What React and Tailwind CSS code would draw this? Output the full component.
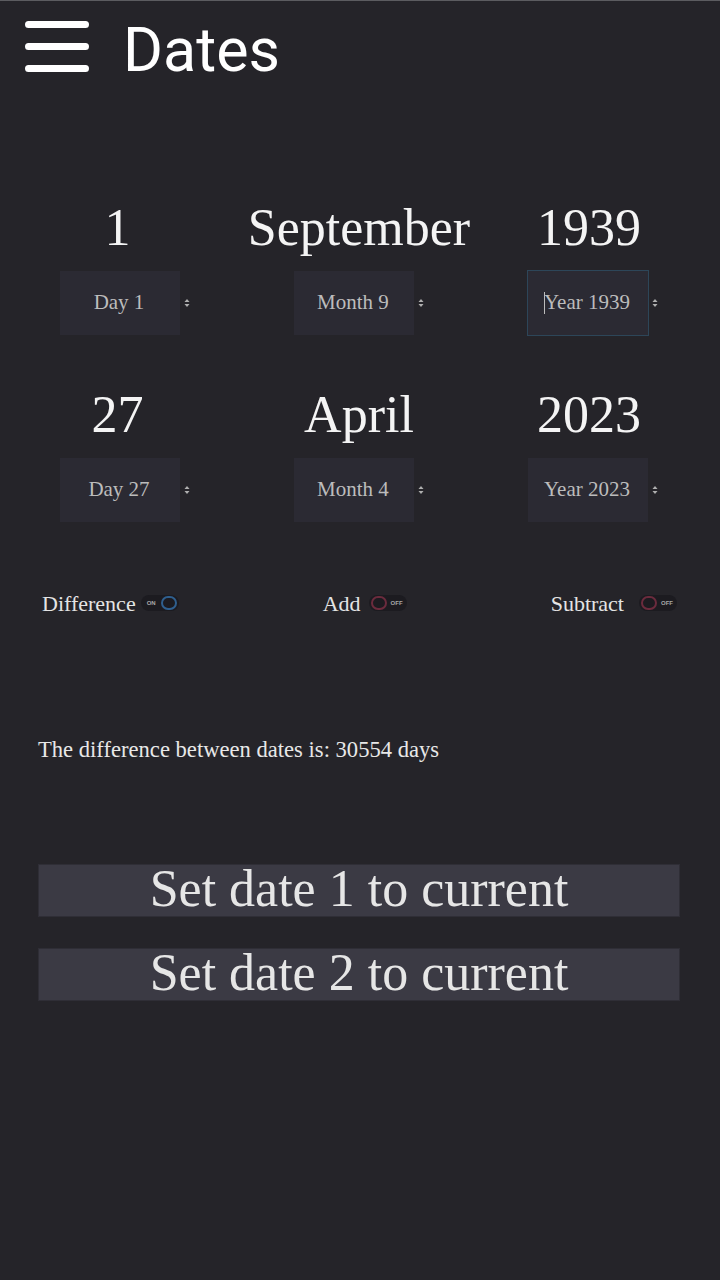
const dateRows = [
  [
    { big: '1', label: 'Day 1', shift: 'pr-[15px]' },
    { big: 'September', label: 'Month 9', shift: '' },
    { big: '1939', label: 'Year 1939', shift: 'pr-[8px]', focused: true },
  ],
  [
    { big: '27', label: 'Day 27', shift: 'pr-[15px]' },
    { big: 'April', label: 'Month 4', shift: '' },
    { big: '2023', label: 'Year 2023', shift: 'pr-[8px]' },
  ],
]

const Spinner = () => (
  <svg width="6" height="10" viewBox="0 0 6 10" className="ml-[4px]">
    <path d="M0.5 4 L3 1 L5.5 4 Z" fill="#b0b0b0" />
    <path d="M0.5 6 L3 9 L5.5 6 Z" fill="#b0b0b0" />
  </svg>
)

const Toggle = ({ on, gap }) => (
  <div className={`${gap} flex h-[16px] w-[38px] items-center rounded-full bg-[#1c1b20] px-[2px]`}>
    {on ? (
      <>
        <span className="ml-[4px] text-[6px] font-bold leading-none text-[#a8a8a8] [font-family:'Liberation_Sans',sans-serif]">ON</span>
        <span className="ml-auto h-[14px] w-[16px] rounded-full border-2 border-[#2f5f8e]" />
      </>
    ) : (
      <>
        <span className="h-[14px] w-[16px] rounded-full border-2 border-[#6b2b3d]" />
        <span className="ml-[4px] text-[6px] font-bold leading-none text-[#a8a8a8] [font-family:'Liberation_Sans',sans-serif]">OFF</span>
      </>
    )}
  </div>
)

const App = () => {
  return (
    <div className="min-h-[1280px] w-[720px] border-t border-[#5c5c60] bg-[#252429] [font-family:'Liberation_Serif',serif]">
      {/* Header */}
      <div className="flex h-[99px] items-center">
        <svg width="64" height="60" viewBox="0 0 64 60" className="ml-[25px] mt-[1px]">
          <path d="M3.5 3.5 H60.5 M3.5 25.5 H60.5 M3.5 47.5 H60.5" stroke="#ffffff" strokeWidth="7" strokeLinecap="round" />
        </svg>
        <h1 className="ml-[34px] text-[61px] leading-none text-white [font-family:Roboto,sans-serif]">Dates</h1>
      </div>

      {/* Date pickers */}
      <div className="mt-[98px] flex flex-col gap-[50px]">
        {dateRows.map((row, r) => (
          <div key={r} className="flex justify-between pl-[60px] pr-[62px]">
            {row.map((col, c) => (
              <div key={c} className="flex flex-col items-center">
                <div className={`text-[52px] leading-[60px] text-[#f4f4f4] ${col.shift}`}>{col.big}</div>
                <div className="mt-[13px] flex items-center">
                  <div
                    className={
                      col.focused
                        ? 'flex h-[64px] w-[120px] items-center justify-center bg-[#2b2a33] pr-[2px] text-[21px] text-[#bcbcbc] outline outline-1 outline-[#2d4659]'
                        : 'flex h-[64px] w-[120px] items-center justify-center bg-[#2b2a33] pr-[2px] text-[21px] text-[#bcbcbc]'
                    }
                  >
                    {col.focused && <span className="mr-[-1px] h-[22px] w-[1px] bg-[#bcbcbc]" />}
                    {col.label}
                  </div>
                  <Spinner />
                </div>
              </div>
            ))}
          </div>
        ))}
      </div>

      {/* Mode toggles */}
      <div className="mt-[66px] flex h-[30px] items-center justify-between pl-[42px] pr-[43px] text-[22px] text-[#e4e4e4]">
        <div className="flex items-center">
          <span>Difference</span>
          <Toggle on gap="ml-[5px]" />
        </div>
        <div className="flex items-center">
          <span>Add</span>
          <Toggle on={false} gap="ml-[8px]" />
        </div>
        <div className="flex items-center">
          <span>Subtract</span>
          <Toggle on={false} gap="ml-[15px]" />
        </div>
      </div>

      {/* Result */}
      <p className="mt-[117px] px-[38px] text-[22.6px] leading-[30px] text-[#e8e8e8]">
        The difference between dates is: 30554 days
      </p>

      {/* Actions */}
      <div className="mt-[99px] flex flex-col gap-[31px] pl-[38px] pr-[40px]">
        <button className="h-[53px] w-full border border-[#2f2e36] bg-[#3b3a44] pb-[4px] text-[52px] leading-[48px] text-[#e6e6e6]">
          Set date 1 to current
        </button>
        <button className="h-[53px] w-full border border-[#2f2e36] bg-[#3b3a44] pb-[4px] text-[52px] leading-[48px] text-[#e6e6e6]">
          Set date 2 to current
        </button>
      </div>
    </div>
  )
}

export default App
